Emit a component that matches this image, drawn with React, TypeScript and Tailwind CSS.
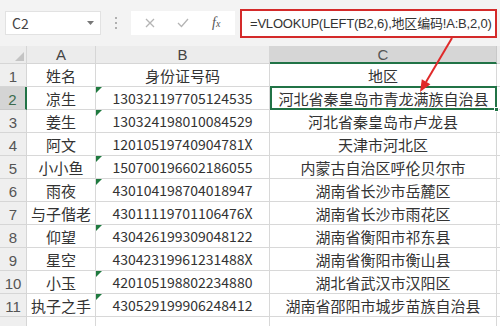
import React from "react";

const rows: [string, string, string, boolean][] = [
  ["凉生", "130321197705124535", "河北省秦皇岛市青龙满族自治县", true],
  ["姜生", "130324198010084529", "河北省秦皇岛市卢龙县", true],
  ["阿文", "12010519740904781X", "天津市河北区", false],
  ["小小鱼", "150700196602186055", "内蒙古自治区呼伦贝尔市", true],
  ["雨夜", "430104198704018947", "湖南省长沙市岳麓区", true],
  ["与子偕老", "43011119701106476X", "湖南省长沙市雨花区", false],
  ["仰望", "430426199309048122", "湖南省衡阳市祁东县", true],
  ["星空", "43042319961231488X", "湖南省衡阳市衡山县", false],
  ["小玉", "420105198802234880", "湖北省武汉市汉阳区", true],
  ["执子之手", "430529199906248412", "湖南省邵阳市城步苗族自治县", true],
];

const cjk = { fontFamily: '"Noto Sans CJK SC", "Liberation Sans", sans-serif' };

function Tri() {
  return (
    <svg className="absolute left-0 top-0" width="6" height="6" viewBox="0 0 6 6">
      <polygon points="0,0 6,0 0,6" fill="#1f7a3f" />
    </svg>
  );
}

export default function App() {
  return (
    <div className="relative w-[500px] h-[326px] overflow-hidden bg-white" style={cjk}>
      {/* toolbar */}
      <div className="h-[46px] bg-[#f3f3f3] flex items-center">
        <div className="ml-[5px] w-[96px] h-[24px] bg-white border border-[#e2e2e2] flex items-center justify-between pl-[6px] pr-[6px]">
          <span className="text-[14px] text-[#444] leading-none">C2</span>
          <svg width="7" height="4" viewBox="0 0 7 4">
            <polygon points="0,0 7,0 3.5,4" fill="#777" />
          </svg>
        </div>
        <div className="w-[30px] flex flex-col items-center gap-[3px]">
          <div className="w-[2px] h-[2px] bg-[#b0b0b0]" />
          <div className="w-[2px] h-[2px] bg-[#b0b0b0]" />
          <div className="w-[2px] h-[2px] bg-[#b0b0b0]" />
        </div>
        <div className="w-[104px] h-[24px] bg-white flex items-center">
          <svg className="ml-[14px]" width="10" height="10" viewBox="0 0 10 10">
            <path d="M1 1 L9 9 M9 1 L1 9" stroke="#b4b4b4" strokeWidth="1.3" />
          </svg>
          <svg className="ml-[22px]" width="12" height="10" viewBox="0 0 12 10">
            <path d="M1 5 L4.5 8.5 L11 1" stroke="#b4b4b4" strokeWidth="1.3" fill="none" />
          </svg>
          <span
            className="ml-[23px] text-[14px] italic text-[#555] leading-none"
            style={{ fontFamily: '"Liberation Serif", serif' }}
          >
            f<span className="text-[10px]">x</span>
          </span>
        </div>
        <div className="ml-[5px] w-[257px] h-[29px] bg-white border-2 border-[#d42a2a] flex items-center pl-[8px]">
          <span
            className="text-[13px] tracking-[-0.2px] text-[#333] leading-none whitespace-nowrap"
            style={{ fontFamily: '"Liberation Sans", "Noto Sans CJK SC", sans-serif' }}
          >
            =VLOOKUP(LEFT(B2,6),地区编码!A:B,2,0)
          </span>
        </div>
      </div>

      {/* grid */}
      <div className="grid grid-cols-[27px_69px_174px_227px_3px] grid-rows-[18px] auto-rows-[23px] text-[#333]">
        {/* header */}
        <div className="bg-[#ececec] border-r border-b border-[#d6d6d6] relative">
          <svg className="absolute right-[2px] bottom-[2px]" width="9" height="9" viewBox="0 0 9 9">
            <polygon points="9,0 9,9 0,9" fill="#c4c4c4" />
          </svg>
        </div>
        <div className="bg-[#ececec] border-r border-b border-[#d6d6d6] flex items-center justify-center text-[15px] text-[#444] leading-none" style={{ fontFamily: '"Liberation Sans", sans-serif' }}>A</div>
        <div className="bg-[#ececec] border-r border-b border-[#d6d6d6] flex items-center justify-center text-[15px] text-[#444] leading-none" style={{ fontFamily: '"Liberation Sans", sans-serif' }}>B</div>
        <div className="bg-[#d6d6d6] border-r border-[#c8c8c8] border-b-2 border-b-[#217346] flex items-center justify-center text-[15px] text-[#555] leading-none" style={{ fontFamily: '"Liberation Sans", sans-serif' }}>C</div>
        <div className="bg-[#ececec] border-b border-[#d6d6d6]" />

        {/* row 1 */}
        <div className="bg-[#efefef] border-r border-b border-[#d6d6d6] flex items-center justify-center text-[15px] text-[#555] leading-none pt-[2px]" style={{ fontFamily: '"Liberation Sans", sans-serif' }}>1</div>
        <div className="border-r border-b border-[#d8d8d8] flex items-center justify-center text-[15px] leading-none">姓名</div>
        <div className="border-r border-b border-[#d8d8d8] flex items-center justify-center text-[15px] leading-none">身份证号码</div>
        <div className="border-r border-b border-[#d8d8d8] flex items-center justify-center text-[15px] leading-none">地区</div>
        <div className="border-b border-[#d8d8d8]" />

        {rows.map(([name, id, region, tri], i) => {
          const sel = i === 0;
          return (
            <React.Fragment key={i}>
              <div
                className={
                  sel
                    ? "bg-[#d4d4d4] border-r-2 border-r-[#217346] border-b border-b-[#c8c8c8] flex items-center justify-center text-[15px] text-[#3d6b4d] leading-none pt-[2px]"
                    : "bg-[#efefef] border-r border-b border-[#d6d6d6] flex items-center justify-center text-[15px] text-[#555] leading-none pt-[2px]"
                }
                style={{ fontFamily: '"Liberation Sans", sans-serif' }}
              >
                {i + 2}
              </div>
              <div className="border-r border-b border-[#d8d8d8] flex items-center justify-center text-[15px] leading-none whitespace-nowrap">
                {name}
              </div>
              <div className="relative border-r border-b border-[#d8d8d8] flex items-center justify-center text-[14px] leading-none whitespace-nowrap">
                {tri && <Tri />}
                {id}
              </div>
              <div
                className={
                  sel
                    ? "relative border-2 border-[#217346] -mt-px flex items-center justify-center text-[15px] leading-none whitespace-nowrap"
                    : "border-r border-b border-[#d8d8d8] flex items-center justify-center text-[15px] leading-none whitespace-nowrap"
                }
              >
                {region}
                {sel && (
                  <div className="absolute right-[-4px] bottom-[-4px] w-[5px] h-[5px] bg-[#217346] border border-white" />
                )}
              </div>
              <div className="border-b border-[#d8d8d8]" />
            </React.Fragment>
          );
        })}

        {/* row 12 */}
        <div className="bg-[#efefef] border-r border-[#d6d6d6]" />
        <div className="border-r border-[#d8d8d8]" />
        <div className="border-r border-[#d8d8d8]" />
        <div className="border-r border-[#d8d8d8]" />
        <div />
      </div>

      {/* arrow */}
      <svg className="absolute left-0 top-0 pointer-events-none" width="500" height="326" viewBox="0 0 500 326">
        <line x1="452" y1="38" x2="426" y2="82" stroke="#e02a2a" strokeWidth="2" />
        <polygon points="420,92 430.4,84.3 421.8,79.2" fill="#e02a2a" />
      </svg>
    </div>
  );
}
